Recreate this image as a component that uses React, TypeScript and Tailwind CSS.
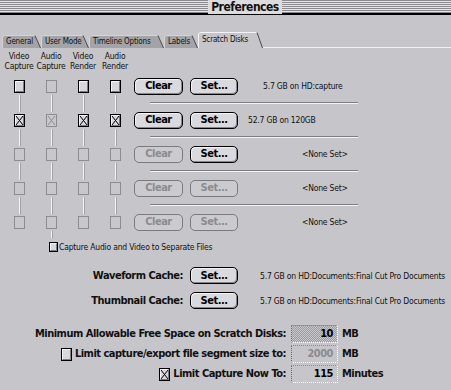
import React from "react";

const SMALL =
  "font-['DejaVu_Sans_Condensed','Liberation_Sans',sans-serif] text-[8.5px] leading-[10px] tracking-[-0.2px] whitespace-nowrap";
const BOLD =
  "font-['DejaVu_Sans_Condensed','Liberation_Sans',sans-serif] text-[11px] font-bold leading-[14px] tracking-[-0.5px] whitespace-nowrap";

function CheckBox({
  on = false,
  off = false,
  small = false,
}: {
  on?: boolean;
  off?: boolean;
  small?: boolean;
}) {
  const w = small ? 9 : 11;
  const h = small ? 10 : 13;
  const ink = off ? "#8d8d91" : "#000";
  return (
    <svg width={w} height={h} className="block shrink-0">
      <rect
        x={0.5}
        y={0.5}
        width={w - 1}
        height={h - 1}
        fill={off ? "#c8c8cc" : "#d8d8dc"}
        stroke={ink}
      />
      {!off && (
        <path d={`M1.5 ${h - 2} V1.5 H${w - 2}`} stroke="#f6f6f8" fill="none" />
      )}
      {!off && (
        <path d={`M1.5 ${h - 1.5} H${w - 1.5} V1.5`} stroke="#7d7d81" fill="none" />
      )}
      {on && (
        <path
          d={`M2 2 L${w - 2} ${h - 2} M${w - 2} 2 L2 ${h - 2}`}
          stroke={ink}
          fill="none"
        />
      )}
    </svg>
  );
}

function Button({ label, off = false, wide = false }: { label: string; off?: boolean; wide?: boolean }) {
  return (
    <div
      className={`flex h-[17px] shrink-0 items-center justify-center rounded-[5px] border ${
        wide ? "w-[49px]" : "w-[48px]"
      } ${
        off
          ? "border-[#7b7b7f] bg-[#cbcbcf] text-[#8b8b8f]"
          : "border-black bg-[#dadade] text-black shadow-[inset_-1px_-1px_0_#86868a,inset_1px_1px_0_#f4f4f6]"
      } ${BOLD}`}
    >
      {label}
    </div>
  );
}

function Link({ show, tall }: { show: boolean; tall?: boolean }) {
  return (
    <div
      className={`w-[1px] ${tall ? "h-[10px]" : "h-[7px]"} ${
        show ? "bg-[#f2f2f4] shadow-[1px_0_0_#a2a2a6]" : ""
      }`}
    />
  );
}

const TABS = [
  { label: "General", w: 39, cls: "w-[39px]" },
  { label: "User Mode", w: 48, cls: "w-[48px]" },
  { label: "Timeline Options", w: 75, cls: "w-[75px]" },
  { label: "Labels", w: 34, cls: "w-[34px]" },
  { label: "Scratch Disks", w: 65, cls: "w-[65px]", active: true },
];

function Tab({ label, w, cls, active }: { label: string; w: number; cls: string; active?: boolean }) {
  const h = active ? 16 : 13;
  return (
    <div className={`relative flex items-center ${cls} ${active ? "h-[16px]" : "h-[13px]"}`}>
      <svg width={w} height={h} className="absolute inset-0">
        <path
          d={`M0.5 ${h} V3 Q0.5 0.5 3 0.5 H${w - 6} L${w - 0.5} ${h} Z`}
          fill={active ? "#c6c6ca" : "#a4a4a8"}
          stroke="none"
        />
        <path
          d={`M0.5 ${h} V3 Q0.5 0.5 3 0.5 H${w - 6}`}
          fill="none"
          stroke={active ? "#f4f4f6" : "#d4d4d8"}
        />
        <path d={`M${w - 6} 0.5 L${w - 0.5} ${h}`} fill="none" stroke="#4a4a4e" />
      </svg>
      <span
        className={`relative pl-[4px] text-[#111] font-['DejaVu_Sans_Condensed','Liberation_Sans',sans-serif] text-[8px] leading-[10px] tracking-[-0.2px] whitespace-nowrap`}
      >
        {label}
      </span>
    </div>
  );
}

type Row = {
  checks: { on?: boolean; off?: boolean }[];
  clearOff?: boolean;
  setOff?: boolean;
  info: string;
  infoCls: string;
};

const ALL_OFF = [{ off: true }, { off: true }, { off: true }, { off: true }];

const ROWS: Row[] = [
  {
    checks: [{}, { off: true }, {}, {}],
    info: "5.7 GB on HD:capture",
    infoCls: "ml-[25px]",
  },
  {
    checks: [{ on: true }, { on: true, off: true }, { on: true }, { on: true }],
    info: "52.7 GB on 120GB",
    infoCls: "ml-[10px]",
  },
  { checks: ALL_OFF, clearOff: true, info: "<None Set>", infoCls: "ml-[64px]" },
  { checks: ALL_OFF, clearOff: true, setOff: true, info: "<None Set>", infoCls: "ml-[64px]" },
  { checks: ALL_OFF, clearOff: true, setOff: true, info: "<None Set>", infoCls: "ml-[64px]" },
];

function FieldRow({
  label,
  value,
  unit,
  box,
  dither,
  dim,
}: {
  label: string;
  value: string;
  unit: string;
  box?: { on?: boolean };
  dither?: boolean;
  dim?: boolean;
}) {
  return (
    <div className="flex h-[18px] items-center">
      <div className="flex w-[286px] items-center justify-end gap-[3px]">
        {box && <CheckBox on={box.on} />}
        <span className={BOLD}>{label}</span>
      </div>
      <div
        className={`ml-[5px] flex h-[18px] w-[47px] items-center justify-end border border-dotted border-t-[#8a8a8e] border-l-[#6a6a6e] border-r-white border-b-white pr-[4px] ${
          dither
            ? "bg-[repeating-conic-gradient(#9c9ca0_0_25%,#c8c8cc_0_50%)] bg-[length:2px_2px]"
            : ""
        } ${dim ? "text-[#8b8b8f]" : "text-black"} ${BOLD}`}
      >
        {value}
      </div>
      <span className={`ml-[4px] ${BOLD}`}>{unit}</span>
    </div>
  );
}

export default function App() {
  return (
    <div className="h-[390px] w-[451px] overflow-hidden bg-[#c6c6ca] text-[#111]">
      {/* title bar */}
      <div className="flex h-[15px] items-start justify-center border-b-2 border-black bg-[repeating-linear-gradient(to_bottom,#8a8a8e_0px,#8a8a8e_1px,#e6e6e8_1px,#e6e6e8_2px)] pl-[39px]">
        <span className={`bg-[#dcdcde] px-[3px] ${BOLD} text-[12px] leading-[12px]`}>
          Preferences
        </span>
      </div>

      {/* tabs */}
      <div className="mt-[17px] flex h-[16px] items-end pl-[2px]">
        {TABS.map((t) => (
          <Tab key={t.label} {...t} />
        ))}
        <div className="h-[1px] flex-1 bg-[#f0f0f2]" />
      </div>

      {/* column headers */}
      <div className={`flex h-[20px] pl-[3px] pt-[3px] ${SMALL}`}>
        {[
          ["Video", "Capture"],
          ["Audio", "Capture"],
          ["Video", "Render"],
          ["Audio", "Render"],
        ].map(([a, b]) => (
          <div key={a + b} className="w-[32px] text-center">
            {a}
            <br />
            {b}
          </div>
        ))}
      </div>

      {/* scratch disk rows */}
      {ROWS.map((r, i) => (
        <div key={i} className="flex h-[34px]">
          <div className="flex pl-[3px]">
            {r.checks.map((c, j) => (
              <div key={j} className="flex w-[32px] flex-col items-center">
                <Link show={i > 0} tall />
                <div className="h-[2px]" />
                <CheckBox on={c.on} off={c.off} />
                <div className="h-[2px]" />
                <Link show={i < 4 || j === 1} />
              </div>
            ))}
          </div>
          <div className="ml-[3px] flex flex-col">
            <div
              className={`ml-[16px] h-[2px] w-[208px] ${
                i > 0 ? "border-t border-b border-t-[#7e7e82] border-b-[#f4f4f6]" : ""
              }`}
            />
            <div className="flex flex-1 items-center">
              <Button label="Clear" off={r.clearOff} wide />
              <div className="ml-[7px]">
                <Button label="Set..." off={r.setOff} />
              </div>
              <span className={`${r.infoCls} ${SMALL}`}>{r.info}</span>
            </div>
          </div>
        </div>
      ))}

      <div className="mt-[4px] flex h-[10px] items-center pl-[49px]">
        <CheckBox small />
        <span className={`ml-[1px] ${SMALL}`}>Capture Audio and Video to Separate Files</span>
      </div>

      {/* caches */}
      <div className="mt-[15px] flex flex-col gap-[8px]">
        {["Waveform Cache:", "Thumbnail Cache:"].map((l) => (
          <div key={l} className="flex h-[17px] items-center">
            <div className={`w-[183px] text-right ${BOLD}`}>{l}</div>
            <div className="ml-[7px]">
              <Button label="Set..." />
            </div>
            <span className={`ml-[22px] ${SMALL}`}>
              5.7 GB on HD:Documents:Final Cut Pro Documents
            </span>
          </div>
        ))}
      </div>

      {/* limits */}
      <div className="mt-[16px] flex flex-col gap-[2px]">
        <FieldRow
          label="Minimum Allowable Free Space on Scratch Disks:"
          value="10"
          unit="MB"
          dither
        />
        <FieldRow
          label="Limit capture/export file segment size to:"
          value="2000"
          unit="MB"
          box={{}}
          dim
        />
        <FieldRow label="Limit Capture Now To:" value="115" unit="Minutes" box={{ on: true }} />
      </div>
    </div>
  );
}
